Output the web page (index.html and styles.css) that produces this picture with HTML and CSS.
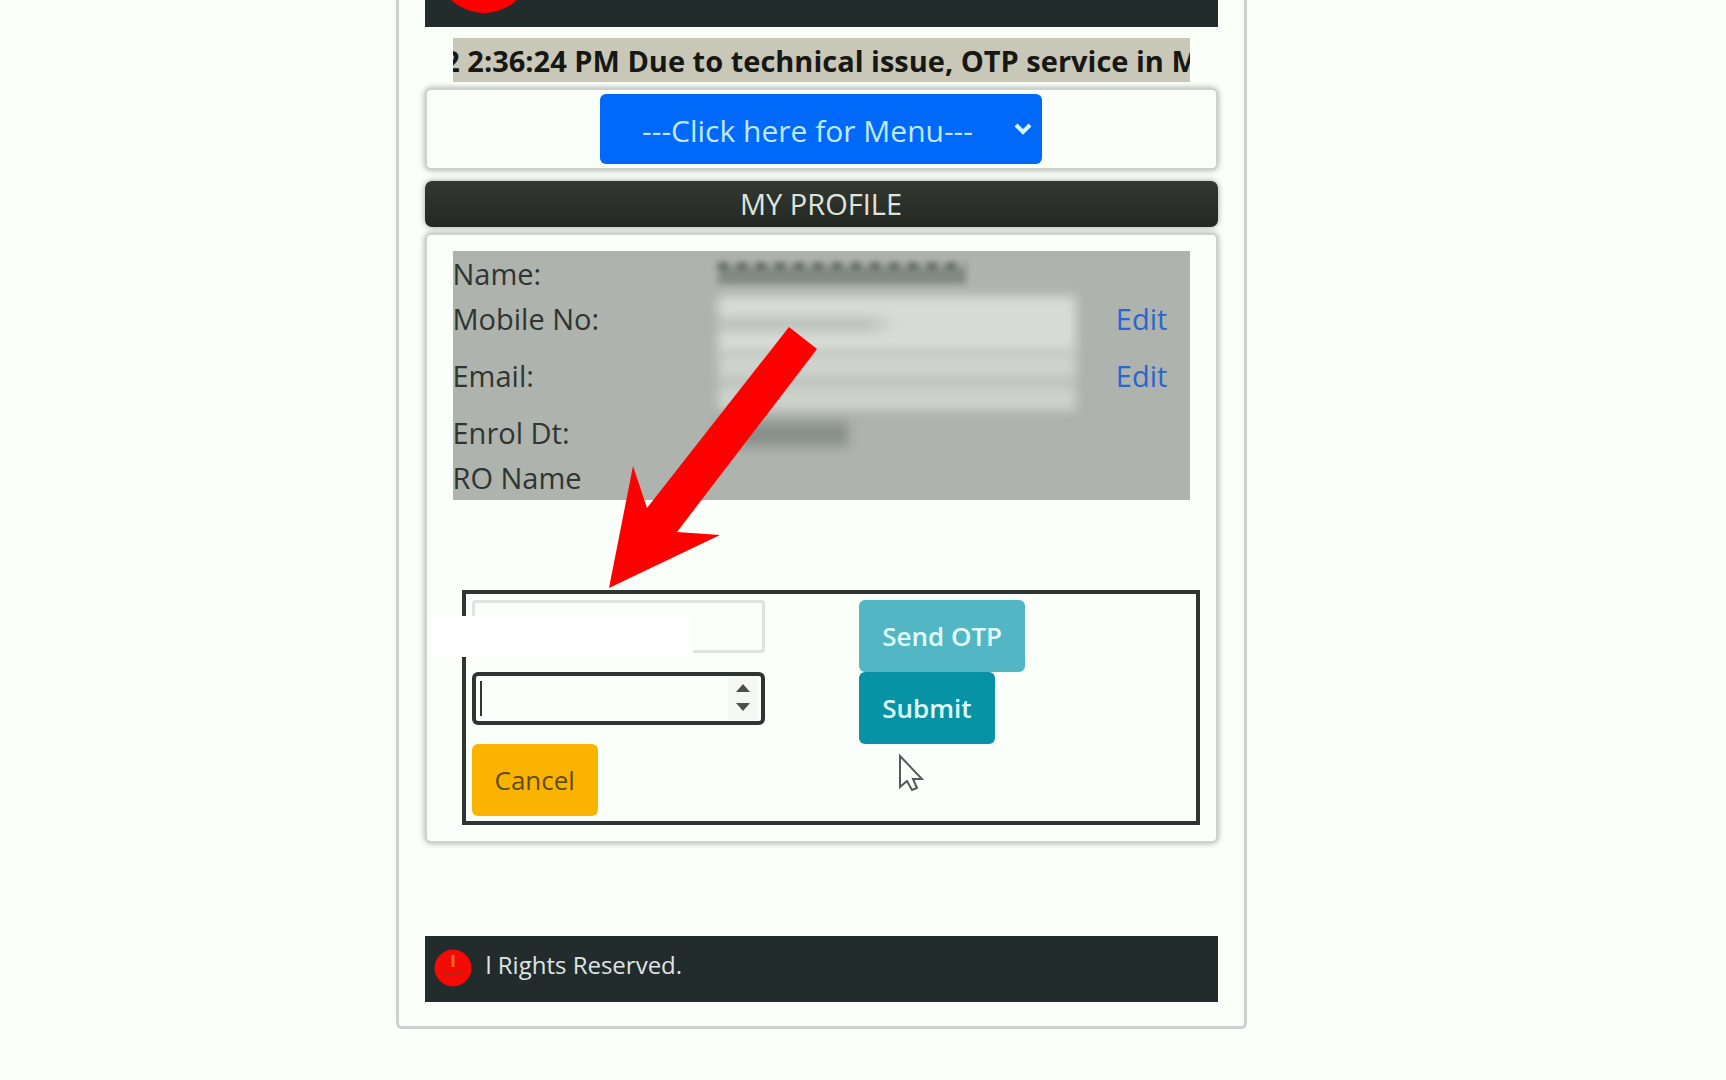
FILE: index.html
```html
<!DOCTYPE html>
<html lang="en">
<head>
<meta charset="utf-8">
<title>My Profile</title>
<link rel="stylesheet" href="styles.css">
</head>
<body>
<div class="card">
  <header class="topbar">
    <svg class="topbar-logo" width="96" height="27" viewBox="0 0 96 27" aria-hidden="true"><circle cx="48" cy="-35" r="48" fill="#f00"/></svg>
  </header>

  <div class="ticker"><span>2 2:36:24 PM Due to technical issue, OTP service in M</span></div>

  <nav class="panel menu-panel">
    <div class="menu">
      <select class="menu-select" aria-label="Menu"><option>---Click here for Menu---</option></select>
      <svg class="menu-arrow" width="18" height="14" viewBox="0 0 18 14" aria-hidden="true"><path d="M2 3l7 7 7-7" fill="none" stroke="#d9faff" stroke-width="4"/></svg>
    </div>
  </nav>

  <h1 class="title">MY PROFILE</h1>

  <main class="panel profile">
    <table class="details">
      <tbody>
        <tr><th scope="row">Name:</th><td><span class="redacted redacted-name"></span></td><td></td></tr>
        <tr class="tall"><th scope="row"><label for="mobile">Mobile No:</label></th><td><input class="hidden-value" id="mobile" readonly></td><td><a href="#mobile">Edit</a></td></tr>
        <tr class="tall"><th scope="row"><label for="email">Email:</label></th><td><input class="hidden-value hidden-email" id="email" readonly></td><td><a href="#email">Edit</a></td></tr>
        <tr><th scope="row">Enrol Dt:</th><td><span class="redacted redacted-date"></span></td><td></td></tr>
        <tr><th scope="row">RO Name</th><td></td><td></td></tr>
      </tbody>
    </table>

    <form class="otp">
      <input class="field" type="text" aria-label="New value">
      <button class="btn send" type="button">Send OTP</button>
      <div class="number">
        <input class="field active" type="text" inputmode="numeric" aria-label="OTP">
        <span class="caret"></span>
        <svg class="spinner" width="34" height="44" viewBox="0 0 34 44" aria-hidden="true"><path fill="#f5f7f4" d="M0 0h30v44H0z"/><path fill="#4c504c" d="M8 16l7-8 7 8zM8 27h14l-7 8z"/></svg>
      </div>
      <button class="btn submit" type="button">Submit</button>
      <button class="btn cancel" type="button">Cancel</button>
      <span class="mask"></span>
    </form>
  </main>

  <footer class="footer">
    <svg width="38" height="38" viewBox="0 0 38 38" aria-hidden="true"><circle cx="19" cy="19" r="18.5" fill="#f50a05"/><path d="M19 6v12" stroke="#ff6a2a" stroke-width="3"/><path d="M10 21q3 7 9 3 6 4 9-3" fill="none" stroke="#c8200f" stroke-width="3"/></svg>
    <span>l Rights Reserved.</span>
  </footer>

  <svg class="pointer-arrow" width="210" height="263" viewBox="0 0 210 263" aria-hidden="true"><path fill="#f00" d="M180 1l28 22L68 206l43 3L0 262 24 140l14 42z"/></svg>
  <svg class="cursor" width="26" height="40" viewBox="0 0 26 40" aria-hidden="true"><path d="M2 2v31l7-6 5 9 5-2-4-9h9z" fill="#fbfffa" stroke="#555a56" stroke-width="2"/></svg>
</div>
</body>
</html>
```
FILE: styles.css
```css
* { box-sizing: border-box; }

body {
  margin: 0;
  padding: 0 84px 48px 0;
  background: #fbfffa;
  color: #2f3532;
  font: 29px/45px "Open Sans", "Noto Sans", sans-serif;
}

.card {
  position: relative;
  max-width: 851px;
  margin: 0 auto;
  padding: 0 26px 24px;
  border: 3px solid #cdd2ce;
  border-top: 0;
  border-radius: 0 0 6px 6px;
}

.topbar {
  display: flex;
  height: 27px;
  padding-left: 11px;
  background: #222c2c;
}

.ticker {
  display: flex;
  justify-content: center;
  overflow: hidden;
  height: 44px;
  margin: 11px 28px 6px;
  background: #c9c8b8;
  color: #171715;
  font-weight: 700;
  white-space: nowrap;
}

.panel {
  border: 2px solid #cdd2cc;
  border-radius: 6px;
  background: #fbfffa;
  box-shadow: 0 0 6px #a4a9a3;
}

.menu-panel { padding: 4px 0; }

.menu {
  position: relative;
  width: 56%;
  margin: 0 auto;
}

.menu-select {
  display: block;
  appearance: none;
  width: 100%;
  height: 70px;
  padding: 2px 42px 0;
  border: 0;
  border-radius: 6px;
  background: #0069fa;
  color: #bfe9ff;
  font: inherit;
  font-size: 30px;
}

.menu-arrow { position: absolute; right: 10px; top: 28px; }

.title {
  height: 46px;
  margin: 11px 0 6px;
  border-radius: 7px;
  background: linear-gradient(#343832, #242822);
  box-shadow: 0 0 6px #9ca19b;
  color: #dfe4df;
  font-size: 29px;
  font-weight: 400;
  line-height: 46px;
  text-align: center;
}

.profile { padding: 16px 26px; }

.details {
  width: 100%;
  border-collapse: collapse;
  table-layout: fixed;
  background: #aeb3ad;
}

.details tr { height: 45px; }
.details .tall { height: 57px; }
.details th, .details td { padding: 0; text-align: left; vertical-align: top; font-weight: 400; }
.details th { width: 36%; }
.details th + td { width: 54%; }
.details a { color: #2b66cf; text-decoration: none; }

.redacted {
  display: block;
  height: 24px;
  margin-top: 12px;
  background: #888f89;
  filter: blur(6px);
}

.redacted-name {
  width: 248px;
  height: 21px;
  background: repeating-linear-gradient(90deg, #4c524e 0 10px, #9fa59f 10px 19px) top / 100% 5px no-repeat #828983;
  filter: blur(3px);
}

.redacted-date { width: 130px; }

.hidden-value {
  display: block;
  width: 358px;
  height: 57px;
  border: 0;
  background: linear-gradient(90deg, #bcc1bb 0 150px, transparent 180px) 0 21px / 100% 15px no-repeat #d8dcd6;
  filter: blur(6px);
}

.hidden-email {
  background: linear-gradient(#bec3bd, #bec3bd) 0 23px / 100% 13px no-repeat #cfd3cd;
}

.otp {
  position: relative;
  display: grid;
  grid-template-columns: 54% 46%;
  grid-auto-rows: 72px;
  align-items: start;
  justify-items: start;
  margin: 90px -10px 0 9px;
  padding: 6px 6px 5px;
  border: 4px solid #2f3532;
}

.field {
  display: block;
  width: 293px;
  height: 53px;
  padding: 0 10px;
  border: 3px solid #dfe3de;
  border-radius: 4px;
  background: #fbfffa;
  font: inherit;
}

.field.active { border: 4px solid #2f3532; border-radius: 6px; }
.number { position: relative; }
.caret { position: absolute; left: 8px; top: 9px; width: 2px; height: 35px; background: #2f3532; }
.spinner { position: absolute; right: 3px; top: 4px; }

.btn {
  height: 72px;
  padding: 0 23px;
  border: 0;
  border-radius: 6px;
  color: #e0ffff;
  font: 600 26px/45px "Open Sans", "Noto Sans", sans-serif;
}

.send { background: #52b6c4; }
.submit { background: #0892a5; }
.cancel { background: #fab400; color: #5e4c12; font-weight: 500; }

.mask {
  position: absolute;
  left: -34px;
  top: 22px;
  width: 261px;
  height: 41px;
  background: #fff;
}

.footer {
  display: flex;
  gap: 14px;
  height: 66px;
  margin-top: 93px;
  padding: 13px 9px;
  background: #222c2c;
  color: #dfe4e2;
  font-size: 24px;
  line-height: 32px;
}

.pointer-arrow { position: absolute; left: 210px; top: 326px; }
.cursor { position: absolute; left: 499px; top: 754px; }
```
